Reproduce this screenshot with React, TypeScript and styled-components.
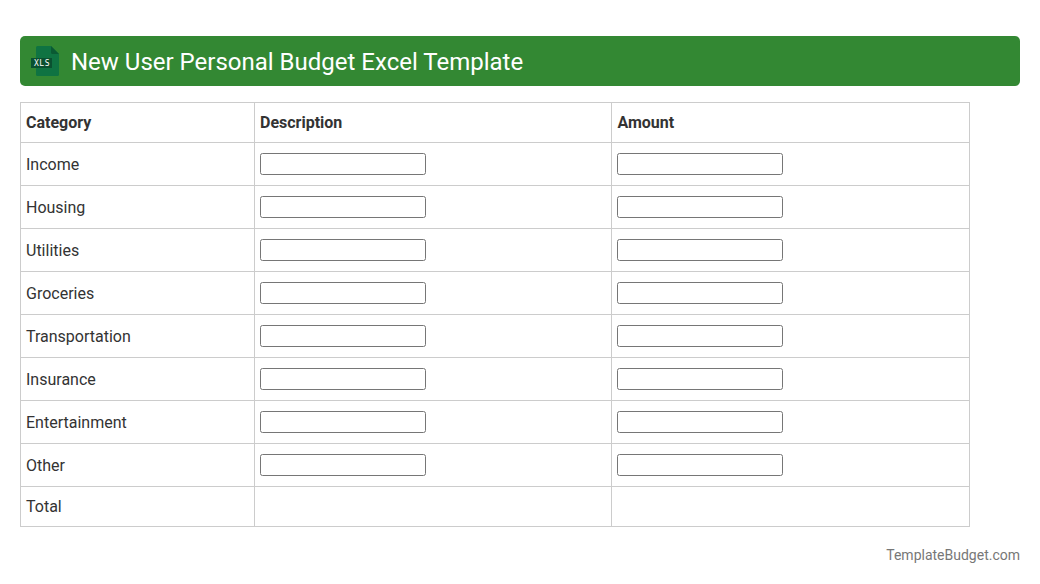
import React from "react";
import styled, { createGlobalStyle } from "styled-components";

const Global = createGlobalStyle`
  html, body { margin: 0; padding: 0; background: #fff; }
  body { font-family: Roboto, "Liberation Sans", sans-serif; color: #333; }
`;
const Page = styled.div`
  width: 1040px; height: 584px; box-sizing: border-box; padding: 36px 20px 0; overflow: hidden;
`;
const Banner = styled.h1`
  margin: 0; height: 50px; box-sizing: border-box; display: flex; align-items: center; gap: 11px;
  padding: 2px 0 0 10px; background: #338833; border-radius: 5px; color: #fff;
  font-size: 24px; font-weight: 400; line-height: 48px;
`;
const Table = styled.table`
  margin-top: 16px; width: 949.5px; border-collapse: collapse; table-layout: fixed; font-size: 16px; line-height: 24px;
`;
const Col = styled.col<{ $w: number }>`
  width: ${(p) => p.$w}px;
`;
const Th = styled.th`
  border: 1px solid #ccc; padding: 8px 5px 7px; text-align: left; font-weight: 700; height: 24px;
`;
const LabelCell = styled.td`
  border: 1px solid #ccc; padding: 10px 5px 8px; height: 24px;
`;
const FieldCell = styled.td`
  border: 1px solid #ccc; padding: 9px 5px; height: 24px; vertical-align: middle;
`;
const TotalCell = styled.td`
  border: 1px solid #ccc; padding: 8px 5px 7px; height: 24px;
`;
const Field = styled.input`
  display: block; width: 166px; height: 22px; box-sizing: border-box; margin: 0; padding: 1px 2px;
  border: 1px solid #767676; border-radius: 2.5px; background: #fff;
`;
const Footer = styled.div`
  margin-top: 20px; text-align: right; font-size: 14px; line-height: 16px; color: #777;
`;
const IconBox = styled.span`
  display: flex; flex: none; margin-top: -2px;
`;
const XlsIcon = () => (
  <IconBox>
    <svg width="30" height="32" viewBox="0 0 30 32" aria-hidden="true">
      <path d="M6 2.500A1.500 1.500 0 0 1 7.500 1H21l8 8V29.500A1.500 1.500 0 0 1 27.500 31H7.500A1.500 1.500 0 0 1 6 29.500z" fill="#0f7342" />
      <path d="M21 1l8 8h-6.500A1.500 1.500 0 0 1 21 7.500z" fill="#0a5a33" />
      <rect x="1" y="13" width="21" height="10" fill="#0a5030" />
      <text x="12" y="21" fontSize="8" letterSpacing="0.6" textAnchor="middle" fill="#fff" fontFamily="'DejaVu Sans Mono', monospace">XLS</text>
    </svg>
  </IconBox>
);
const rows = ["Income", "Housing", "Utilities", "Groceries", "Transportation", "Insurance", "Entertainment", "Other"];
export default function App() {
  return (
    <Page>
      <Global />
      <Banner><XlsIcon />New User Personal Budget Excel Template</Banner>
      <Table>
        <colgroup>
          <Col $w={234} />
          <Col $w={357.4} />
          <Col $w={358.1} />
        </colgroup>
        <thead>
          <tr><Th>Category</Th><Th>Description</Th><Th>Amount</Th></tr>
        </thead>
        <tbody>
          {rows.map((r) => (
            <tr key={r}>
              <LabelCell>{r}</LabelCell>
              <FieldCell><Field /></FieldCell>
              <FieldCell><Field /></FieldCell>
            </tr>
          ))}
          <tr><TotalCell>Total</TotalCell><TotalCell /><TotalCell /></tr>
        </tbody>
      </Table>
      <Footer>TemplateBudget.com</Footer>
    </Page>
  );
}
